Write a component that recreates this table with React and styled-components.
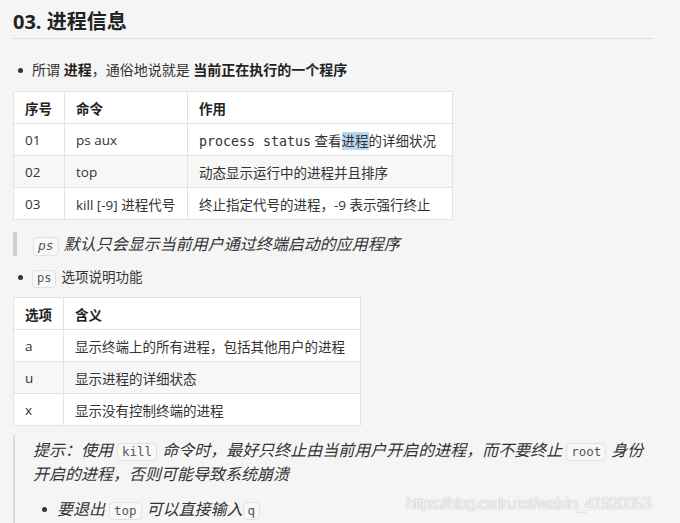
import styled, { createGlobalStyle } from "styled-components";

const GlobalStyle = createGlobalStyle`
  html, body {
    margin: 0;
    padding: 0;
    background: #f5f5f5;
  }
  body {
    font-family: "Open Sans", "Noto Sans CJK SC", sans-serif;
    color: #333;
    overflow: hidden;
  }
`;

const Page = styled.div`
  position: relative;
  width: 680px;
  height: 523px;
  padding: 0 0 0 13px;
  box-sizing: border-box;
  overflow: hidden;
`;

const Heading = styled.h2`
  margin: 0;
  padding-top: 9px;
  width: 640px;
  height: 29px;
  font-size: 20px;
  font-weight: 700;
  line-height: 26px;
  color: #222;
  border-bottom: 1px dotted #c8c8c8;
`;

const List = styled.ul`
  margin: ${(p) => p.$margin || "0"};
  padding: 0 0 0 ${(p) => p.$indent || "19px"};
  list-style: none;
`;

const Item = styled.li`
  position: relative;
  font-size: ${(p) => p.$size || "13.5px"};
  line-height: 22px;
  font-style: ${(p) => (p.$italic ? "italic" : "normal")};
  &::before {
    content: "";
    position: absolute;
    left: ${(p) => p.$dotLeft || "-14px"};
    top: 9px;
    width: 5px;
    height: 5px;
    border-radius: 50%;
    background: #333;
  }
  b {
    font-weight: 700;
    color: #222;
  }
`;

const Table = styled.table`
  border-collapse: collapse;
  background: #fff;
  margin: ${(p) => p.$margin};
  font-size: 13.5px;

  th, td {
    border: 1px solid #e3e3e3;
    text-align: left;
    padding: 0 11px;
    height: 31px;
    white-space: nowrap;
  }
  th {
    font-weight: 700;
    color: #222;
  }
  tbody tr:nth-child(2) td {
    background: #f7f7f7;
  }
`;

const Mono = styled.span`
  font-family: "DejaVu Sans Mono", monospace;
  font-size: 13.3px;
`;

const Selected = styled.span`
  background: #b9d5f2;
`;

const Code = styled.code`
  display: inline-block;
  font-family: "DejaVu Sans Mono", monospace;
  font-size: ${(p) => p.$size || "12px"};
  font-style: ${(p) => (p.$italic ? "italic" : "normal")};
  line-height: 1.3;
  padding: 0 4px;
  margin: 0 5px 0 ${(p) => (p.$first ? "0" : "4px")};
  border: 1px solid #e2e2e2;
  border-radius: 4px;
  background: #f8f8f8;
  color: #555;
`;

const Quote = styled.blockquote`
  margin: ${(p) => p.$margin};
  padding: ${(p) => p.$padding};
  border-left: ${(p) => p.$bar} solid ${(p) => p.$barColor};
  font-style: italic;
  font-size: 16px;
  line-height: 24px;
  color: #333;
  width: ${(p) => p.$width || "auto"};
`;

const QuoteText = styled.p`
  margin: 0;
`;

const Watermark = styled.div`
  position: absolute;
  left: 406px;
  top: 494px;
  font-family: "Liberation Sans", Arial, sans-serif;
  font-size: 17px;
  letter-spacing: -1.2px;
  color: rgba(255, 255, 255, 0.9);
  text-shadow: 0 0 1px rgba(110, 110, 110, 0.7);
  white-space: nowrap;
`;

const processRows = [
  ["01", "ps aux", "status"],
  ["02", "top", "动态显示运行中的进程并且排序"],
  ["03", "kill [-9] 进程代号", "终止指定代号的进程，-9 表示强行终止"],
];

const optionRows = [
  ["a", "显示终端上的所有进程，包括其他用户的进程"],
  ["u", "显示进程的详细状态"],
  ["x", "显示没有控制终端的进程"],
];

const App = () => {
  return (
    <Page>
      <GlobalStyle />
      <Heading>03. 进程信息</Heading>

      <List $margin="20px 0 0 0">
        <Item $size="14px">
          所谓 <b>进程</b>，通俗地说就是 <b>当前正在执行的一个程序</b>
        </Item>
      </List>

      <Table $margin="10px 0 0 0">
        <thead>
          <tr>
            <th style={{ width: 28 }}>序号</th>
            <th style={{ width: 100 }}>命令</th>
            <th style={{ width: 242 }}>作用</th>
          </tr>
        </thead>
        <tbody>
          {processRows.map(([no, cmd, use]) => (
            <tr key={no}>
              <td>{no}</td>
              <td>{cmd}</td>
              <td>
                {use === "status" ? (
                  <>
                    <Mono>process status</Mono> 查看<Selected>进程</Selected>的详细状况
                  </>
                ) : (
                  use
                )}
              </td>
            </tr>
          ))}
        </tbody>
      </Table>

      <Quote $margin="12px 0 0 0" $padding="0 0 0 16px" $bar="4px" $barColor="#cfcfcf">
        <QuoteText>
          <Code $italic $first $size="13px">ps</Code>默认只会显示当前用户通过终端启动的应用程序
        </QuoteText>
      </Quote>

      <List $margin="10px 0 0 0">
        <Item>
          <Code $first>ps</Code>选项说明功能
        </Item>
      </List>

      <Table $margin="9px 0 0 0">
        <thead>
          <tr>
            <th style={{ width: 27 }}>选项</th>
            <th style={{ width: 274 }}>含义</th>
          </tr>
        </thead>
        <tbody>
          {optionRows.map(([opt, desc]) => (
            <tr key={opt}>
              <td>{opt}</td>
              <td>{desc}</td>
            </tr>
          ))}
        </tbody>
      </Table>

      <Quote $margin="9px 0 0 0" $padding="3px 0 30px 18px" $bar="2px" $barColor="#dcdcdc" $width="620px">
        <QuoteText>
          提示：使用<Code $size="12.5px">kill</Code>命令时，最好只终止由当前用户开启的进程，而不要终止<Code $size="12.5px">root</Code>身份开启的进程，否则可能导致系统崩溃
        </QuoteText>
        <List $margin="12px 0 0 0" $indent="24px">
          <Item $size="16px" $italic $dotLeft="-15px">
            要退出<Code $size="12.5px">top</Code>可以直接输入<Code $first $size="12.5px">q</Code>
          </Item>
        </List>
      </Quote>

      <Watermark>https://blog.csdn.net/weixin_41920053</Watermark>
    </Page>
  );
};

export default App;
